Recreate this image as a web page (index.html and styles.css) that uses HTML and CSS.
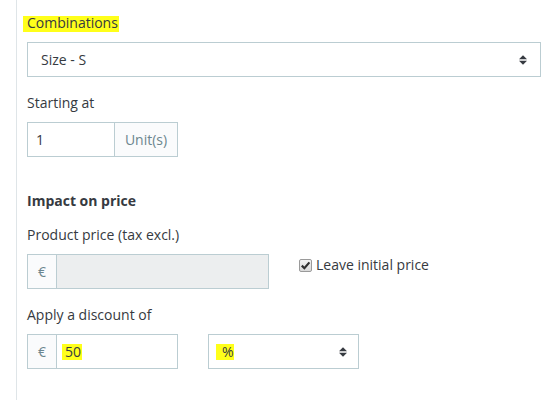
FILE: index.html
```html
<!DOCTYPE html>
<html>
<head>
<meta charset="utf-8">
<link rel="stylesheet" href="styles.css">
</head>
<body>
<div class="panel">
  <div class="group">
    <div class="lbl"><span class="hl hl-label">Combinations</span></div>
    <div class="select select-wide">
      <span class="select-text">Size - S</span>
      <svg class="caret" width="8" height="10" viewBox="0 0 8 10"><path d="M0 4.2 L4 0.2 L8 4.2 Z M0 5.8 L4 9.8 L8 5.8 Z" fill="#363a41"/></svg>
    </div>
  </div>

  <div class="group group-last">
    <div class="lbl">Starting at</div>
    <div class="igroup igroup-qty">
      <div class="ifield"><span>1</span></div>
      <div class="addon addon-unit">Unit(s)</div>
    </div>
  </div>

  <div class="heading">Impact on price</div>

  <div class="group">
    <div class="lbl">Product price (tax excl.)</div>
    <div class="row">
      <div class="igroup igroup-price">
        <div class="addon addon-cur">€</div>
        <div class="ifield ifield-disabled"></div>
      </div>
      <div class="check">
        <span class="cbox"><svg width="11" height="11" viewBox="0 0 11 11"><path d="M1.8 5.6 L4.4 8.2 L9.4 2.4" fill="none" stroke="#2f2f2f" stroke-width="2.2"/></svg></span>
        <span class="check-text">Leave initial price</span>
      </div>
    </div>
  </div>

  <div class="group">
    <div class="lbl">Apply a discount of</div>
    <div class="row">
      <div class="igroup igroup-disc">
        <div class="addon addon-cur">€</div>
        <div class="ifield"><span class="hl hl-val">50</span></div>
      </div>
      <div class="select select-small">
        <span class="select-text"><span class="hl hl-pct">%</span></span>
        <svg class="caret" width="8" height="10" viewBox="0 0 8 10"><path d="M0 4.2 L4 0.2 L8 4.2 Z M0 5.8 L4 9.8 L8 5.8 Z" fill="#363a41"/></svg>
      </div>
    </div>
  </div>
</div>
</body>
</html>
```

FILE: styles.css
```css
html, body {
  margin: 0;
  padding: 0;
  background: #ffffff;
}

body {
  font-family: "Open Sans", "Liberation Sans", sans-serif;
  font-size: 14px;
  line-height: 20px;
  color: #363a41;
  height: 400px;
  overflow: hidden;
}

.panel {
  margin-left: 16px;
  border-left: 1px solid #dfe5e8;
  padding: 13px 0 0 10px;
  height: 400px;
  box-sizing: border-box;
}

.group {
  margin-bottom: 16px;
}

.group-last {
  margin-bottom: 34px;
}

.lbl {
  margin-bottom: 9px;
  height: 20px;
}

.heading {
  font-weight: 700;
  height: 20px;
  margin-bottom: 14px;
}

.hl {
  background-image: linear-gradient(#ffff1a, #ffff1a);
  background-repeat: no-repeat;
}

.hl-label {
  padding: 0 1px 0 4px;
  margin-left: -4px;
  background-size: 100% 16px;
  background-position: 0 2.5px;
}

.hl-val {
  padding: 0 1px 0 3px;
  margin-left: -3px;
  background-size: 100% 16px;
  background-position: 0 2px;
}

.hl-pct {
  padding: 0 0 0 6px;
  margin-left: -6px;
  background-size: 100% 16px;
  background-position: 0 2px;
}

.select {
  height: 35px;
  box-sizing: border-box;
  border: 1px solid #bbcdd2;
  background: #ffffff;
  display: flex;
  align-items: center;
  justify-content: space-between;
  padding: 0 13px 0 13px;
}

.select-wide {
  width: 514px;
}

.select-small {
  width: 151px;
  padding-right: 11px;
}

.caret {
  display: block;
  margin-top: 1px;
}

.igroup {
  display: flex;
  height: 35px;
  box-sizing: border-box;
  border: 1px solid #bbcdd2;
}

.igroup-qty {
  width: 151px;
}

.igroup-price {
  width: 242px;
}

.igroup-disc {
  width: 151px;
}

.ifield {
  flex: 1;
  display: flex;
  align-items: center;
  padding: 0 8px;
  background: #ffffff;
}

.ifield-disabled {
  background: #eceeef;
}

.addon {
  display: flex;
  align-items: center;
  justify-content: center;
  background: #fafbfc;
  color: #6c868e;
}

.addon-unit {
  width: 62px;
  border-left: 1px solid #bbcdd2;
}

.addon-cur {
  width: 28px;
  border-right: 1px solid #bbcdd2;
}

.row {
  display: flex;
  align-items: flex-start;
  gap: 30px;
}

.check {
  display: flex;
  align-items: center;
  gap: 4px;
  margin-top: 1px;
  height: 20px;
}

.cbox {
  width: 13px;
  height: 13px;
  box-sizing: border-box;
  border: 1px solid #9a9a9a;
  border-radius: 2px;
  background: linear-gradient(#f2f2f2, #d9d9d9);
  display: flex;
  align-items: center;
  justify-content: center;
}

.cbox svg {
  display: block;
}
```
